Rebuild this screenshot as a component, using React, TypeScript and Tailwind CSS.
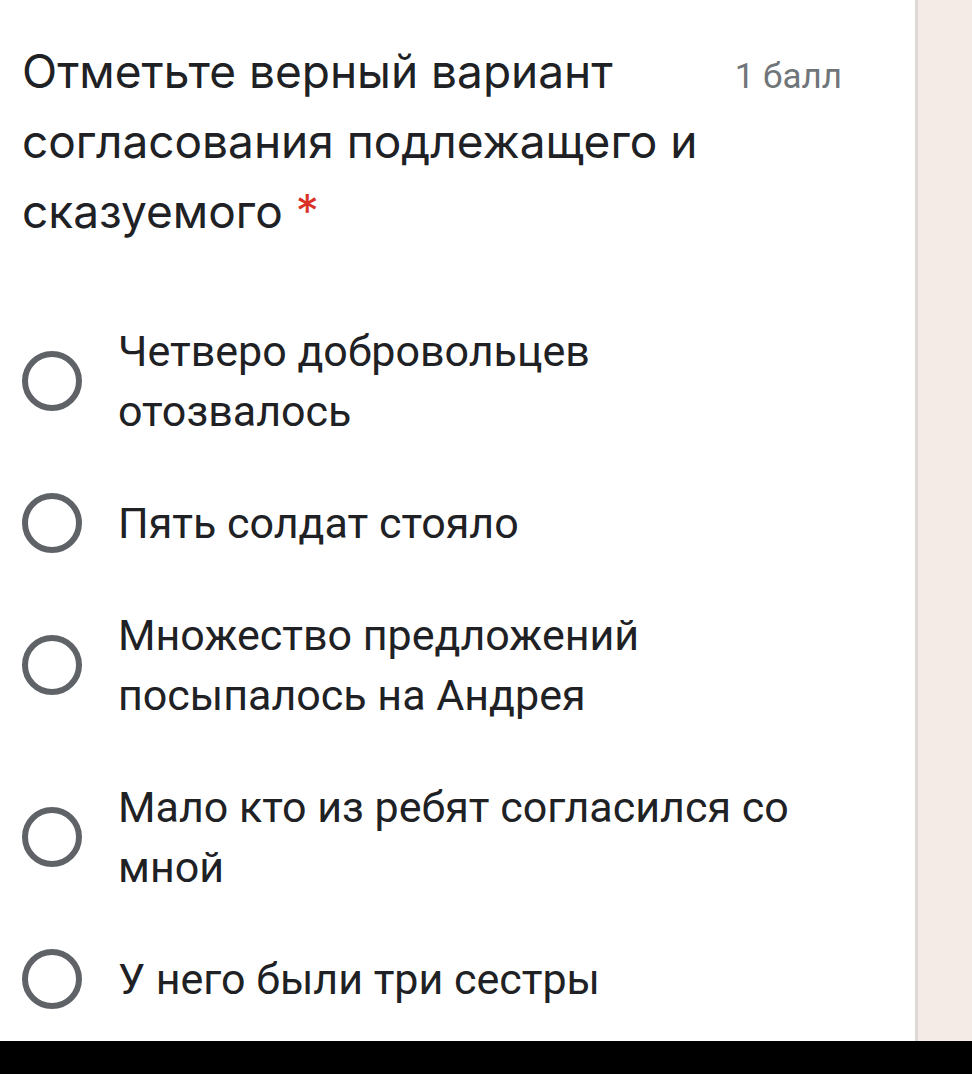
import React from 'react';

const options = [
  'Четверо добровольцев отозвалось',
  'Пять солдат стояло',
  'Множество предложений посыпалось на Андрея',
  'Мало кто из ребят согласился со мной',
  'У него были три сестры',
];

const Radio = () => (
  <span className="shrink-0 w-[60px] h-[60px] rounded-full border-[6px] border-[#5f6368]" />
);

export default function App() {
  return (
    <div className="w-[972px] h-[1074px] flex flex-col bg-black overflow-hidden">
      <div className="flex flex-1 min-h-0">
        {/* Карточка вопроса */}
        <div className="w-[915px] bg-white pt-[36px] pl-[22px] pr-[73px]">
          <div className="flex items-baseline gap-[24px]">
            <h2 className="flex-1 text-[46px] leading-[70px] text-[#202124] font-['Inter','Noto_Sans',sans-serif] font-normal">
              Отметьте верный вариант согласования подлежащего и сказуемого{' '}
              <span className="text-[#d93025]">*</span>
            </h2>
            <span className="shrink-0 text-[35px] text-[#70757a] font-['Roboto',sans-serif]">1 балл</span>
          </div>

          <div className="mt-[75px] flex flex-col gap-[52px]">
            {options.map((text) => (
              <label key={text} className="flex items-center gap-[36px]">
                <Radio />
                <span className="max-w-[690px] text-[43px] leading-[60px] text-[#202124] font-['Roboto',sans-serif]">
                  {text}
                </span>
              </label>
            ))}
          </div>
        </div>

        {/* Боковая полоса */}
        <div className="w-[3px] bg-[#dcd8d5]" />
        <div className="flex-1 bg-[#f4ebe6]" />
      </div>
      <div className="h-[33px] bg-black" />
    </div>
  );
}
